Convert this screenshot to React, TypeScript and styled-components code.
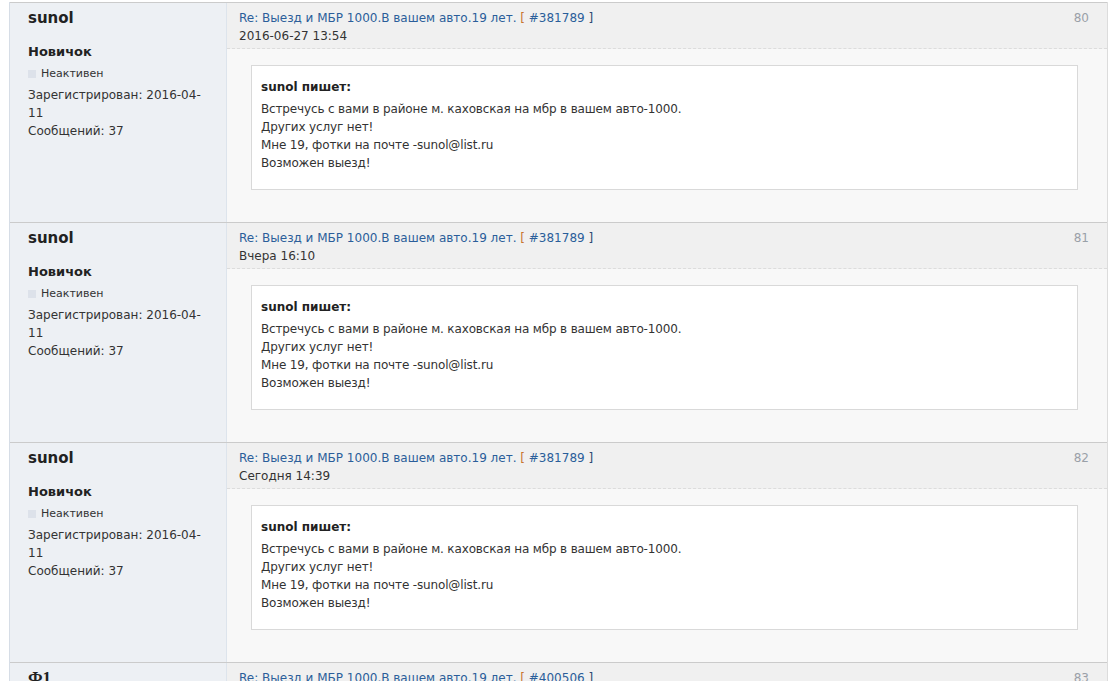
import React from 'react';
import styled, { createGlobalStyle } from 'styled-components';

interface Post {
  id: number;
  author: string;
  serifName?: boolean;
  rank: string;
  registered: string;
  messages: number;
  title: string;
  ref: string;
  date: string;
  quoteAuthor: string;
  lines: string[];
}

const quoteLines = [
  'Встречусь с вами в районе м. каховская на мбр в вашем авто-1000.',
  'Других услуг нет!',
  'Мне 19, фотки на почте -sunol@list.ru',
  'Возможен выезд!',
];

const posts: Post[] = [
  {
    id: 80,
    author: 'sunol',
    rank: 'Новичок',
    registered: '2016-04-11',
    messages: 37,
    title: 'Re: Выезд и МБР 1000.В вашем авто.19 лет.',
    ref: '#381789',
    date: '2016-06-27 13:54',
    quoteAuthor: 'sunol',
    lines: quoteLines,
  },
  {
    id: 81,
    author: 'sunol',
    rank: 'Новичок',
    registered: '2016-04-11',
    messages: 37,
    title: 'Re: Выезд и МБР 1000.В вашем авто.19 лет.',
    ref: '#381789',
    date: 'Вчера 16:10',
    quoteAuthor: 'sunol',
    lines: quoteLines,
  },
  {
    id: 82,
    author: 'sunol',
    rank: 'Новичок',
    registered: '2016-04-11',
    messages: 37,
    title: 'Re: Выезд и МБР 1000.В вашем авто.19 лет.',
    ref: '#381789',
    date: 'Сегодня 14:39',
    quoteAuthor: 'sunol',
    lines: quoteLines,
  },
  {
    id: 83,
    author: 'Ф1',
    serifName: true,
    rank: 'Новичок',
    registered: '2016-04-11',
    messages: 37,
    title: 'Re: Выезд и МБР 1000.В вашем авто.19 лет.',
    ref: '#400506',
    date: 'Сегодня 15:02',
    quoteAuthor: 'sunol',
    lines: quoteLines,
  },
];

const App: React.FC = () => {
  return (
    <>
      <GlobalStyle />
      <Topic>
        {posts.map(post => (
          <PostRow key={post.id}>
            <UserCol>
              <UserName $serif={post.serifName}>{post.author}</UserName>
              <Rank>{post.rank}</Rank>
              <Status>
                <StatusDot />
                Неактивен
              </Status>
              <Info>Зарегистрирован: {post.registered}</Info>
              <Info>Сообщений: {post.messages}</Info>
            </UserCol>
            <MainCol>
              <PostHead>
                <HeadText>
                  <TitleLine>
                    <TitleLink href="#">{post.title}</TitleLink>{' '}
                    <Bracket>[</Bracket> <TitleLink href="#">{post.ref}</TitleLink>{' '}
                    <CloseBracket>]</CloseBracket>
                  </TitleLine>
                  <PostDate>{post.date}</PostDate>
                </HeadText>
                <PostNum>{post.id}</PostNum>
              </PostHead>
              <PostBody>
                <Quote>
                  <QuoteTitle>{post.quoteAuthor} пишет:</QuoteTitle>
                  {post.lines.map((line, i) => (
                    <QuoteLine key={i}>{line}</QuoteLine>
                  ))}
                </Quote>
              </PostBody>
            </MainCol>
          </PostRow>
        ))}
      </Topic>
    </>
  );
};

export default App;

const GlobalStyle = createGlobalStyle`
  html, body {
    margin: 0;
    padding: 0;
    background: #fff;
    overflow: hidden;
  }
  body {
    font-family: "DejaVu Sans", Verdana, sans-serif;
    font-size: 12px;
    line-height: 18px;
    color: #333;
  }
`;

const Topic = styled.div`
  margin: 2px 0 0 9px;
  width: 1099px;
  box-sizing: border-box;
  border-left: 1px solid #d6dde6;
  border-right: 1px solid #dcdcdc;
`;

const PostRow = styled.div`
  display: flex;
  height: 220px;
  box-sizing: border-box;
  border-top: 1px solid #cbcbcb;
  overflow: hidden;
`;

const UserCol = styled.div`
  width: 217px;
  flex-shrink: 0;
  box-sizing: border-box;
  padding: 4px 20px 0 18px;
  background: #edf0f4;
  border-right: 1px solid #dde4ec;
`;

const UserName = styled.div<{ $serif?: boolean }>`
  font-family: ${p => (p.$serif ? '"Liberation Serif", serif' : '"DejaVu Sans", Verdana, sans-serif')};
  font-size: ${p => (p.$serif ? '17px' : '15px')};
  font-weight: bold;
  line-height: 22px;
  color: #222;
  margin-bottom: 13px;
`;

const Rank = styled.div`
  font-size: 13px;
  font-weight: bold;
  line-height: 20px;
  color: #222;
  margin-bottom: 2px;
`;

const Status = styled.div`
  display: flex;
  align-items: center;
  font-size: 11px;
  line-height: 20px;
  color: #333;
  margin-bottom: 2px;
`;

const StatusDot = styled.span`
  width: 8px;
  height: 8px;
  background: #dde2ea;
  margin-right: 5px;
`;

const Info = styled.div`
  font-size: 12px;
  line-height: 18px;
  color: #333;
`;

const MainCol = styled.div`
  flex: 1;
  display: flex;
  flex-direction: column;
  background: #f8f8f8;
`;

const PostHead = styled.div`
  display: flex;
  justify-content: space-between;
  align-items: flex-start;
  height: 46px;
  box-sizing: border-box;
  padding: 6px 18px 0 12px;
  background: #f0f0f0;
  border-bottom: 1px dashed #dcdcdc;
`;

const HeadText = styled.div`
  display: flex;
  flex-direction: column;
`;

const TitleLine = styled.div`
  color: #2b5e9a;
`;

const TitleLink = styled.a`
  color: #2b5e9a;
  text-decoration: none;
`;

const Bracket = styled.span`
  color: #c7772e;
`;

const CloseBracket = styled.span`
  color: #2f4a72;
`;

const PostDate = styled.div`
  color: #333;
`;

const PostNum = styled.div`
  color: #9aa0a8;
`;

const PostBody = styled.div`
  padding: 16px 29px 0 24px;
`;

const Quote = styled.div`
  background: #fff;
  border: 1px solid #d9d9d9;
  padding: 12px 10px 17px 9px;
`;

const QuoteTitle = styled.div`
  font-weight: bold;
  color: #222;
  margin-bottom: 4px;
`;

const QuoteLine = styled.div`
  color: #333;
  letter-spacing: -0.15px;
`;
